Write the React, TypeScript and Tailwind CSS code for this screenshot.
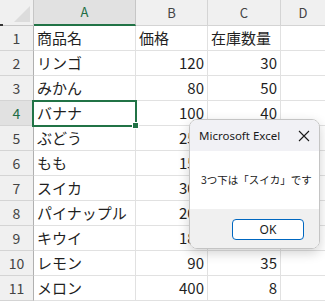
import React from 'react';

const rows = [
  { a: '商品名', b: '価格', c: '在庫数量', header: true },
  { a: 'リンゴ', b: '120', c: '30' },
  { a: 'みかん', b: '80', c: '50' },
  { a: 'バナナ', b: '100', c: '40' },
  { a: 'ぶどう', b: '250', c: '' },
  { a: 'もも', b: '150', c: '' },
  { a: 'スイカ', b: '300', c: '' },
  { a: 'パイナップル', b: '200', c: '' },
  { a: 'キウイ', b: '180', c: '' },
  { a: 'レモン', b: '90', c: '35' },
  { a: 'メロン', b: '400', c: '8' },
];

const font = { fontFamily: '"Noto Sans CJK JP", "Noto Sans", sans-serif' };

const App = () => {
  return (
    <div
      className="relative w-[325px] h-[304px] overflow-hidden bg-white text-[#1f1f1f]"
      style={font}
    >
      {/* column headers */}
      <div className="flex h-[26px] bg-[#f0f0f0]">
        <div className="relative w-[34px] border-r border-b border-[#c6c6c6] bg-[#f0f0f0]">
          <div className="absolute right-[3px] bottom-[3px] w-0 h-0 border-l-[16px] border-l-transparent border-b-[16px] border-b-[#dcdcdc]" />
          <div className="absolute left-0 bottom-[-1px] w-[3px] h-[2px] bg-[#333]" />
        </div>
        <div className="w-[102px] flex items-center justify-center border-r border-[#c6c6c6] bg-[#e1e1e1] border-b-2 border-b-[#217346] text-[13px] text-[#1e6e45]">
          A
        </div>
        <div className="w-[72px] flex items-center justify-center border-r border-b border-[#d4d4d4] text-[13px] text-[#444]">
          B
        </div>
        <div className="w-[73px] flex items-center justify-center border-r border-b border-[#d4d4d4] text-[13px] text-[#444]">
          C
        </div>
        <div className="flex-1 flex items-center justify-center border-b border-[#d4d4d4] text-[13px] text-[#444]">
          D
        </div>
      </div>

      {/* rows */}
      {rows.map((r, i) => {
        const n = i + 1;
        const sel = n === 4;
        return (
          <div key={n} className="flex h-[25px]">
            <div
              className={
                sel
                  ? 'w-[34px] flex items-center justify-center border-r border-b border-r-[#b0b0b0] border-b-[#d4d4d4] bg-[#e1e1e1] text-[14px] text-[#1e6e45]'
                  : 'w-[34px] flex items-center justify-center border-r border-b border-r-[#b0b0b0] border-b-[#d4d4d4] bg-[#f0f0f0] text-[14px] text-[#444]'
              }
            >
              {n}
            </div>
            <div className="w-[102px] flex items-center pl-[3px] border-r border-b border-[#e1e1e1] text-[15px] whitespace-nowrap">
              {r.a}
            </div>
            <div
              className={
                r.header
                  ? 'w-[72px] flex items-center pl-[3px] border-r border-b border-[#e1e1e1] text-[15px] whitespace-nowrap'
                  : 'w-[72px] flex items-center justify-end pr-[3px] border-r border-b border-[#e1e1e1] text-[15px]'
              }
            >
              {r.b}
            </div>
            <div
              className={
                r.header
                  ? 'w-[73px] flex items-center pl-[3px] border-r border-b border-[#e1e1e1] text-[15px] whitespace-nowrap'
                  : 'w-[73px] flex items-center justify-end pr-[3px] border-r border-b border-[#e1e1e1] text-[15px]'
              }
            >
              {r.c}
            </div>
            <div className="flex-1 border-b border-[#e1e1e1]" />
          </div>
        );
      })}

      {/* selected cell A4 */}
      <div className="absolute left-[32px] top-[100px] w-[105px] h-[27px] border-2 border-[#217346]" />
      <div className="absolute left-[132px] top-[122px] w-[7px] h-[7px] bg-[#217346] border border-white" />

      {/* message box */}
      <div className="absolute left-[189px] top-[119px] w-[131px] h-[130px] rounded-[8px] border border-[#c4c4c4] overflow-hidden flex flex-col shadow-[0_4px_12px_rgba(0,0,0,0.18)]">
        <div className="h-[31px] bg-[#f1f1f5] flex items-center justify-between pl-[9px] pr-[8px]">
          <span className="text-[11.5px] text-[#1a1a1a]" style={{ fontFamily: '"Noto Sans", sans-serif' }}>
            Microsoft Excel
          </span>
          <svg width="12" height="12" viewBox="0 0 12 12" className="mr-[1px]">
            <path d="M1 1L11 11M11 1L1 11" stroke="#1a1a1a" strokeWidth="1.1" />
          </svg>
        </div>
        <div className="h-[58px] bg-white flex items-center pl-[11px] text-[10.5px] text-[#1a1a1a] whitespace-nowrap">
          3つ下は「スイカ」です
        </div>
        <div className="flex-1 bg-[#f0f0f0] pt-[10px] pl-[42px]">
          <div
            className="w-[72px] h-[21px] rounded-[4px] border border-[#0067c0] bg-white flex items-center justify-center text-[12px] text-[#1a1a1a]"
            style={{ fontFamily: '"Noto Sans", sans-serif' }}
          >
            OK
          </div>
        </div>
      </div>
    </div>
  );
};

export default App;
